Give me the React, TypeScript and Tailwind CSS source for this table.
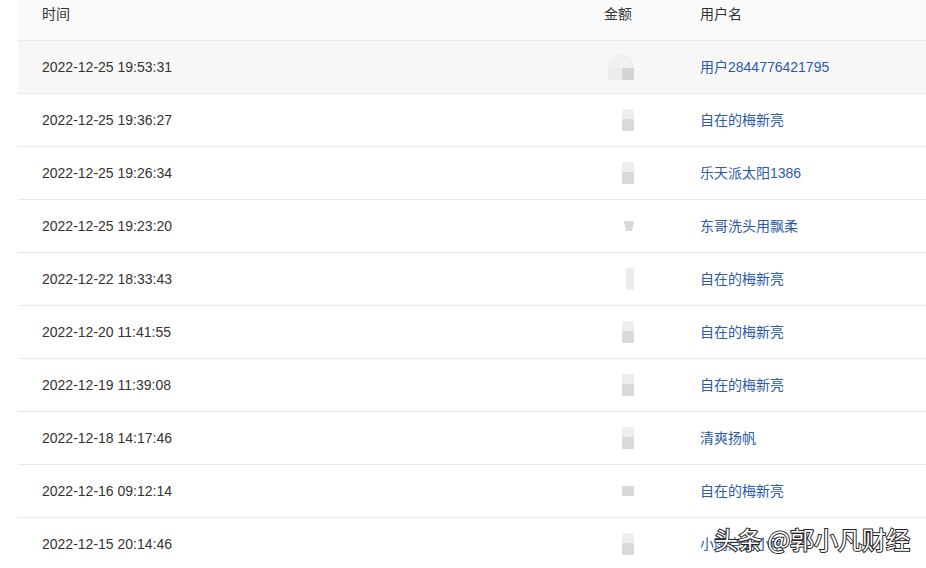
import React from "react";

const rows = [
  ["2022-12-25 19:53:31", "用户2844776421795", "a"],
  ["2022-12-25 19:36:27", "自在的梅新亮", "b"],
  ["2022-12-25 19:26:34", "乐天派太阳1386", "b"],
  ["2022-12-25 19:23:20", "东哥洗头用飘柔", "c"],
  ["2022-12-22 18:33:43", "自在的梅新亮", "d"],
  ["2022-12-20 11:41:55", "自在的梅新亮", "b"],
  ["2022-12-19 11:39:08", "自在的梅新亮", "b"],
  ["2022-12-18 14:17:46", "清爽扬帆", "b"],
  ["2022-12-16 09:12:14", "自在的梅新亮", "e"],
  ["2022-12-15 20:14:46", "小雨点的小雨", "b"],
];

function Blob({ kind }: { kind: string }) {
  if (kind === "a")
    return (
      <div className="flex flex-col items-end">
        <div className="w-[26px] h-[14px] rounded-t-full bg-[#f0f0f0]" />
        <div className="flex">
          <div className="w-[14px] h-[12px] bg-[#ececec]" />
          <div className="w-[12px] h-[12px] bg-[#d4d4d4]" />
        </div>
      </div>
    );
  if (kind === "c")
    return <div className="w-[10px] h-[10px] bg-[#d8d8d8] [clip-path:polygon(0_0,100%_0,80%_100%,20%_100%)]" />;
  if (kind === "d")
    return <div className="w-[8px] h-[22px] bg-[#ececec]" />;
  if (kind === "e")
    return <div className="w-[12px] h-[10px] bg-[#d8d8d8]" />;
  return (
    <div className="flex flex-col">
      <div className="w-[12px] h-[10px] bg-[#eeeeee]" />
      <div className="w-[12px] h-[12px] bg-[#dadada]" />
    </div>
  );
}

export default function App() {
  return (
    <div className="relative w-[926px] h-[568px] overflow-hidden bg-white font-['Liberation_Sans','Noto_Sans_CJK_SC',sans-serif] text-[14px]">
      <div className="ml-[18px]">
        <div className="flex h-[41px] items-center bg-[#fafafa] border-b border-[#e8e8e8] text-[#333]">
          <div className="w-[562px] pl-[24px] pb-[12px]">时间</div>
          <div className="w-[120px] text-right pr-[68px] pb-[12px]">金额</div>
          <div className="pb-[12px]">用户名</div>
        </div>
        {rows.map(([t, n, k], i) => (
          <div
            key={i}
            className={`flex h-[53px] items-center border-b border-[#e8e8e8] ${i === 0 ? "bg-[#f7f7f7]" : "bg-white"}`}
          >
            <div className="w-[562px] pl-[24px] text-[#333]">{t}</div>
            <div className="w-[120px] flex justify-end pr-[66px]">
              <Blob kind={k} />
            </div>
            <div className="text-[#2b5aa8]">{n}</div>
          </div>
        ))}
      </div>
      <div className="absolute left-[714px] top-[523px] text-[24px] leading-[32px] text-white font-['Noto_Sans_CJK_SC',sans-serif] [-webkit-text-stroke:2px_#222] [paint-order:stroke_fill]">
        头条 @郭小凡财经
      </div>
    </div>
  );
}
